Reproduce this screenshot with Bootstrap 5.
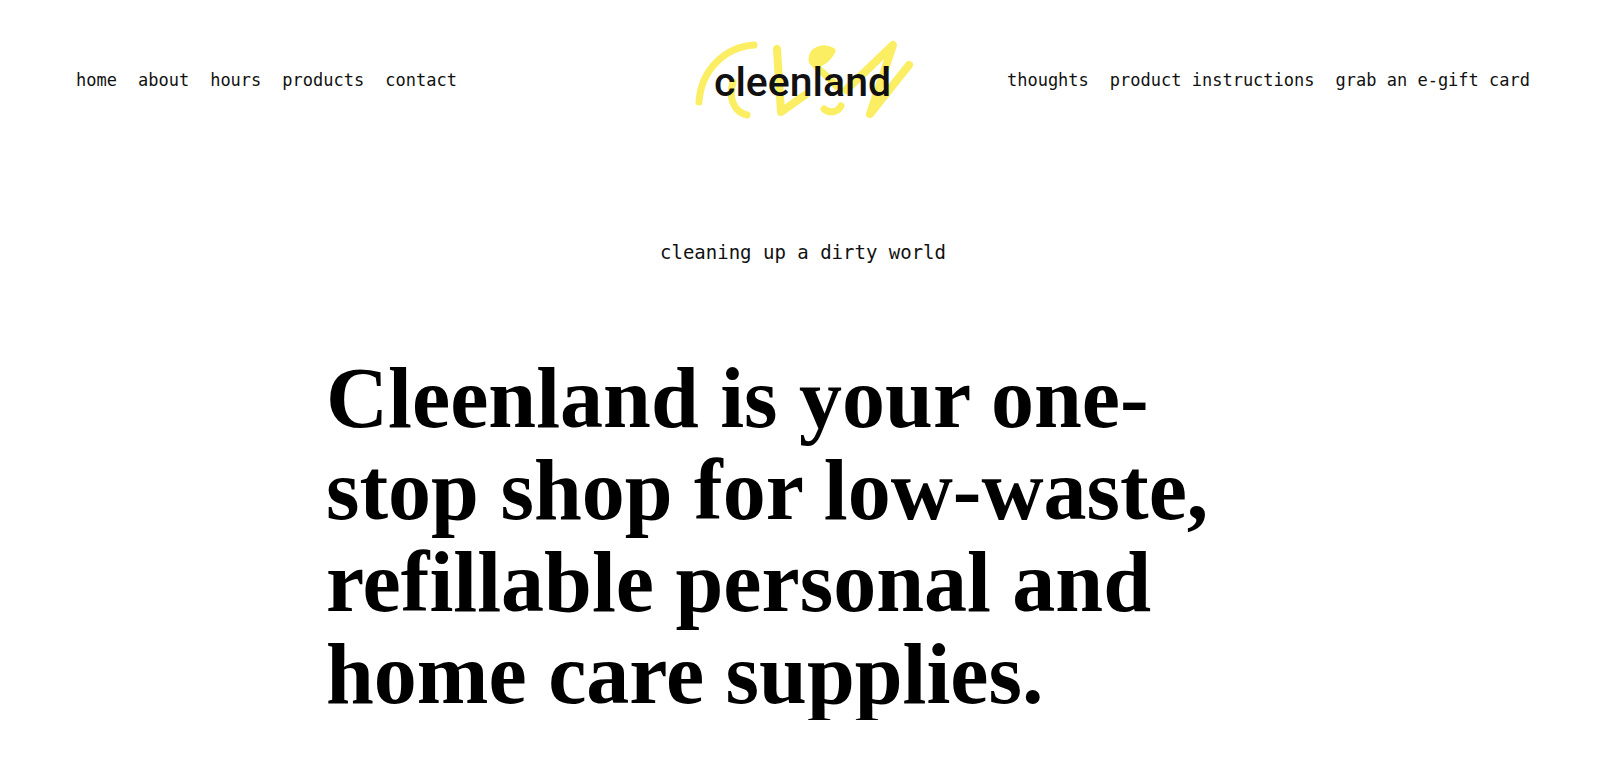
<!DOCTYPE html>
<html lang="en">
<head>
<meta charset="utf-8">
<meta name="viewport" content="width=device-width, initial-scale=1">
<title>cleenland</title>
<link href="https://cdn.jsdelivr.net/npm/bootstrap@5.3.0/dist/css/bootstrap.min.css" rel="stylesheet">
<style>
  body { background: #fff; color: #000; font-family: "DejaVu Sans Mono", monospace; }
  .site-header { padding: 30px 70px 0 76px; }
  .site-nav { font-size: 17px; line-height: 24px; column-gap: 21px; flex: 1 1 0; }
  .site-nav a { color: #111; text-decoration: none; white-space: nowrap; }
  .site-nav a:hover { text-decoration: underline; }
  .brand-logo { width: 250px; height: 100px; }
  .brand-logo text { font-family: Roboto, sans-serif; font-size: 41px; font-weight: 500; fill: #111; }
  .page-body { padding: 0 70px 0 76px; }
  .tagline { font-size: 19px; line-height: 28px; margin-top: 108px; color: #111; }
  .intro { max-width: 954px; margin-top: 86px; }
  .intro h1 { font-family: "Liberation Serif", serif; font-weight: 700; font-size: 86px; line-height: 92px; }
</style>
</head>
<body>
<header class="site-header d-flex flex-wrap align-items-center justify-content-center">
  <nav class="site-nav d-flex" aria-label="Main">
    <a href="#">home</a>
    <a href="#">about</a>
    <a href="#">hours</a>
    <a href="#">products</a>
    <a href="#">contact</a>
  </nav>
  <a href="#" class="d-block" aria-label="cleenland">
    <svg class="brand-logo d-block" viewBox="-2 0 250 100">
      <g fill="none" stroke="#fbee62" stroke-width="7" stroke-linecap="round" stroke-linejoin="round">
        <path d="M74 15C45 17 21 40 19 72"/>
        <path d="M53 52C48 68 54 82 67 85"/>
        <path d="M97 19L101 82L125 65" stroke-width="8"/>
        <path d="M152 21C144 16 132 20 132 29C132 38 146 33 152 21M138 27L144 24M134 33C138 40 150 48 156 56"/>
        <path d="M161 76C158 82 150 84 144 79"/>
        <path d="M166 60L213 15L190 84L229 35" stroke-width="8"/>
      </g>
      <text x="34" y="66">cleenland</text>
    </svg>
  </a>
  <nav class="site-nav d-flex justify-content-end" aria-label="Shop">
    <a href="#">thoughts</a>
    <a href="#">product instructions</a>
    <a href="#">grab an e-gift card</a>
  </nav>
</header>
<main class="page-body">
  <p class="tagline text-center mb-0">cleaning up a dirty world</p>
  <section class="intro mx-auto">
    <h1 class="mb-0">Cleenland is your one-stop shop for low-waste, refillable personal and home care supplies.</h1>
  </section>
</main>
<script src="https://cdn.jsdelivr.net/npm/bootstrap@5.3.0/dist/js/bootstrap.bundle.min.js"></script>
</body>
</html>
